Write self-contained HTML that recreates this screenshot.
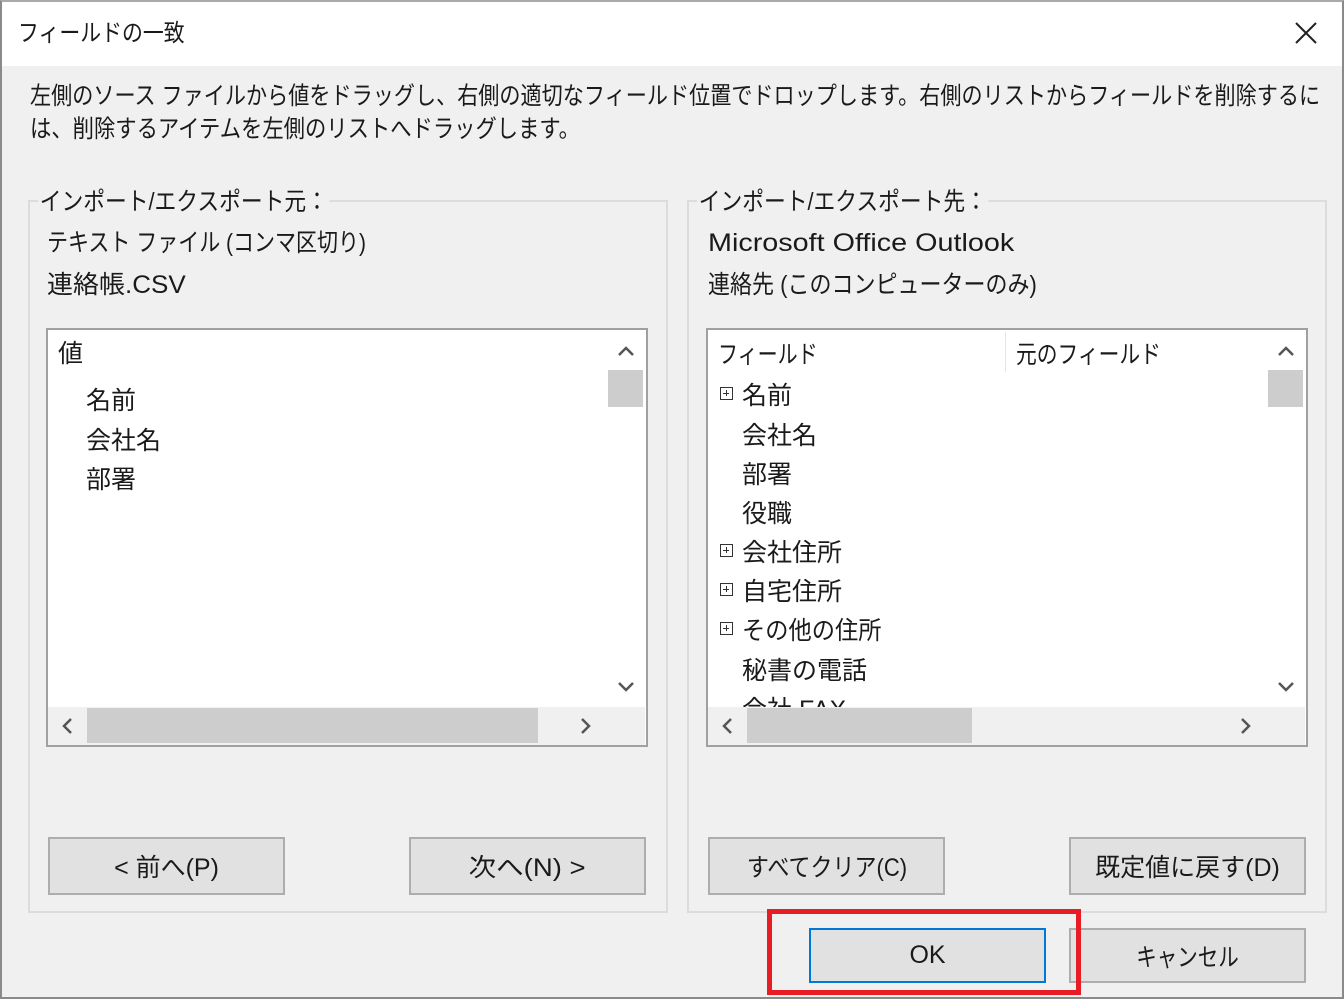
<!DOCTYPE html>
<html><head><meta charset="utf-8"><style>
*{margin:0;padding:0;box-sizing:border-box}
body{width:1344px;height:999px;background:#f0f0f0;font-family:"Liberation Sans","Noto Sans CJK JP",sans-serif;color:#1a1a1a;position:relative;overflow:hidden}
.a{position:absolute;white-space:nowrap;line-height:1;transform-origin:0 50%}
.win{position:absolute;left:0;top:0;width:1344px;height:999px;border:2px solid #8a8a8a;border-top-color:#aaa}
.title{position:absolute;left:2px;top:2px;width:1340px;height:64px;background:#fff}
.grp{position:absolute;border:2px solid #dcdcdc}
.lbl{background:#f0f0f0;padding:0 2px}
.list{position:absolute;background:#fff;border:2px solid #a0a0a0}
.btn{position:absolute;background:#e1e1e1;border:2px solid #adadad;font-size:25px;display:flex;align-items:center;justify-content:center;white-space:nowrap}
.btn span{display:inline-block}
.t{font-size:25px}
.pb{position:absolute;width:13px;height:13px;border:1.5px solid #333;font-size:0}
.pb:before{content:"";position:absolute;left:2px;top:4.5px;width:6px;height:1.5px;background:#333}
.pb:after{content:"";position:absolute;left:4.5px;top:2px;width:1.5px;height:6px;background:#333}
</style></head><body>
<div class="win"></div>
<div class="title"></div>
<div class="a" style="left:18px;top:22px;font-size:24px;transform:scaleX(0.87)">フィールドの一致</div>
<svg class="a" style="left:1294px;top:21px" width="24" height="24"><path d="M2 2L22 22M22 2L2 22" stroke="#222" stroke-width="2"/></svg>
<div class="a t" style="left:30px;top:85px;font-size:24.5px;transform:scaleX(0.862)">左側のソース ファイルから値をドラッグし、右側の適切なフィールド位置でドロップします。右側のリストからフィールドを削除するに</div>
<div class="a t" style="left:30px;top:118px;font-size:24.5px;transform:scaleX(0.87)">は、削除するアイテムを左側のリストへドラッグします。</div>

<div class="grp" style="left:28px;top:200px;width:640px;height:713px"></div>
<div class="a t lbl" style="left:38px;top:190px;transform:scaleX(0.87)">インポート/エクスポート元：</div>
<div class="a t" style="left:47px;top:231px;transform:scaleX(0.84)">テキスト ファイル (コンマ区切り)</div>
<div class="a t" style="left:47px;top:273px;transform:scaleX(1.04)">連絡帳.CSV</div>
<div class="list" style="left:46px;top:328px;width:602px;height:419px"></div>
<div class="a" style="left:608px;top:331px;width:36px;height:376px;background:#fff"></div>
<div class="a" style="left:608px;top:370px;width:35px;height:37px;background:#cdcdcd"></div>
<div class="a" style="left:48px;top:707px;width:597px;height:38px;background:#f0f0f0"></div>
<div class="a" style="left:87px;top:708px;width:451px;height:35px;background:#cdcdcd"></div>
<svg class="a" style="left:616px;top:344px" width="20" height="14"><path d="M3 11L10 4L17 11" stroke="#555" stroke-width="2.5" fill="none"/></svg>
<svg class="a" style="left:616px;top:680px" width="20" height="14"><path d="M3 3L10 10L17 3" stroke="#555" stroke-width="2.5" fill="none"/></svg>
<svg class="a" style="left:60px;top:716px" width="14" height="20"><path d="M11 3L4 10L11 17" stroke="#555" stroke-width="2.5" fill="none"/></svg>
<svg class="a" style="left:579px;top:716px" width="14" height="20"><path d="M3 3L10 10L3 17" stroke="#555" stroke-width="2.5" fill="none"/></svg>
<div class="a t" style="left:58px;top:342px">値</div>
<div class="a t" style="left:86px;top:389px">名前</div>
<div class="a t" style="left:86px;top:429px">会社名</div>
<div class="a t" style="left:86px;top:468px">部署</div>
<div class="btn" style="left:48px;top:837px;width:237px;height:58px"><span>&lt; 前へ(P)</span></div>
<div class="btn" style="left:409px;top:837px;width:237px;height:58px"><span style="transform:scaleX(1.1)">次へ(N) &gt;</span></div>

<div class="grp" style="left:687px;top:200px;width:640px;height:713px"></div>
<div class="a t lbl" style="left:697px;top:190px;transform:scaleX(0.87)">インポート/エクスポート先：</div>
<div class="a t" style="left:708px;top:231px;transform:scaleX(1.15)">Microsoft Office Outlook</div>
<div class="a t" style="left:708px;top:273px;transform:scaleX(0.88)">連絡先 (このコンピューターのみ)</div>
<div class="list" style="left:706px;top:328px;width:602px;height:419px;overflow:hidden"></div>
<div class="a" style="left:708px;top:330px;width:560px;height:377px;overflow:hidden">
 <div class="a t" style="left:10px;top:13px;transform:scaleX(0.8)">フィールド</div>
 <div class="a" style="left:297px;top:2px;width:1px;height:40px;background:#e5e5e5"></div>
 <div class="a t" style="left:308px;top:13px;transform:scaleX(0.83)">元のフィールド</div>
 <div class="pb" style="left:12px;top:57px"></div><div class="a t" style="left:34px;top:54px">名前</div>
 <div class="a t" style="left:34px;top:94px">会社名</div>
 <div class="a t" style="left:34px;top:133px">部署</div>
 <div class="a t" style="left:34px;top:172px">役職</div>
 <div class="pb" style="left:12px;top:214px"></div><div class="a t" style="left:34px;top:211px">会社住所</div>
 <div class="pb" style="left:12px;top:253px"></div><div class="a t" style="left:34px;top:250px">自宅住所</div>
 <div class="pb" style="left:12px;top:292px"></div><div class="a t" style="left:34px;top:289px;transform:scaleX(0.93)">その他の住所</div>
 <div class="a t" style="left:34px;top:329px">秘書の電話</div>
 <div class="a t" style="left:34px;top:368px">会社 FAX</div>
</div>
<div class="a" style="left:1268px;top:331px;width:36px;height:376px;background:#fff"></div>
<div class="a" style="left:1268px;top:370px;width:35px;height:37px;background:#cdcdcd"></div>
<div class="a" style="left:708px;top:707px;width:597px;height:38px;background:#f0f0f0"></div>
<div class="a" style="left:747px;top:708px;width:225px;height:35px;background:#cdcdcd"></div>
<svg class="a" style="left:1276px;top:344px" width="20" height="14"><path d="M3 11L10 4L17 11" stroke="#555" stroke-width="2.5" fill="none"/></svg>
<svg class="a" style="left:1276px;top:680px" width="20" height="14"><path d="M3 3L10 10L17 3" stroke="#555" stroke-width="2.5" fill="none"/></svg>
<svg class="a" style="left:720px;top:716px" width="14" height="20"><path d="M11 3L4 10L11 17" stroke="#555" stroke-width="2.5" fill="none"/></svg>
<svg class="a" style="left:1239px;top:716px" width="14" height="20"><path d="M3 3L10 10L3 17" stroke="#555" stroke-width="2.5" fill="none"/></svg>
<div class="btn" style="left:708px;top:837px;width:237px;height:58px"><span style="transform:scaleX(0.88)">すべてクリア(C)</span></div>
<div class="btn" style="left:1069px;top:837px;width:237px;height:58px"><span>既定値に戻す(D)</span></div>

<div class="btn" style="left:809px;top:928px;width:237px;height:55px;border-color:#0078d7"><span>OK</span></div>
<div class="btn" style="left:1069px;top:928px;width:237px;height:55px"><span style="transform:scaleX(0.82)">キャンセル</span></div>
<div class="a" style="left:767px;top:909px;width:314px;height:86px;border:5px solid #e81c24"></div>
</body></html>
